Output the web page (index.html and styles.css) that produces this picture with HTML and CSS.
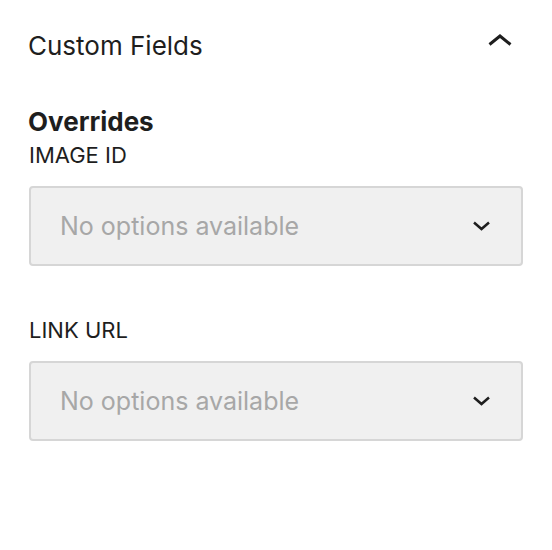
FILE: index.html
```html
<!DOCTYPE html>
<html>
<head>
<meta charset="utf-8">
<link rel="stylesheet" href="styles.css">
</head>
<body>
<div class="panel">
  <div class="panel-header">
    <span class="panel-title">Custom Fields</span>
    <svg class="chevron-up" width="24" height="24" viewBox="0 0 24 24"><path d="M1.5 11.5 L12 3 L22.5 11.5" fill="none" stroke="#1e1e1e" stroke-width="3"/></svg>
  </div>
  <div class="panel-body">
    <h2 class="section-title">Overrides</h2>
    <div class="field">
      <label class="field-label">IMAGE ID</label>
      <div class="select">
        <span class="select-placeholder">No options available</span>
        <svg class="chevron-down" width="17" height="10" viewBox="0 0 17 10"><path d="M1 1.5 L8.5 8 L16 1.5" fill="none" stroke="#1e1e1e" stroke-width="2.5"/></svg>
      </div>
    </div>
    <div class="field">
      <label class="field-label">LINK URL</label>
      <div class="select">
        <span class="select-placeholder">No options available</span>
        <svg class="chevron-down" width="17" height="10" viewBox="0 0 17 10"><path d="M1 1.5 L8.5 8 L16 1.5" fill="none" stroke="#1e1e1e" stroke-width="2.5"/></svg>
      </div>
    </div>
  </div>
</div>
</body>
</html>
```

FILE: styles.css
```css
html, body {
  margin: 0;
  padding: 0;
  background: #ffffff;
}

body {
  font-family: Inter, "Noto Sans", "Liberation Sans", sans-serif;
  color: #1e1e1e;
}

.panel {
  padding: 0 29px 0 29px;
}

.panel-header {
  display: flex;
  align-items: center;
  justify-content: space-between;
  padding-top: 30px;
  height: 32px;
}

.panel-title {
  font-size: 26px;
  line-height: 32px;
  font-weight: 400;
  margin-left: -1px;
}

.chevron-up {
  display: block;
  margin-right: 11px;
  margin-top: -2px;
}

.panel-body {
  padding-top: 44px;
}

.section-title {
  margin: 0 0 0 -1px;
  font-size: 26px;
  line-height: 32px;
  font-weight: 700;
}

.field {
  display: flex;
  flex-direction: column;
}

.field + .field {
  margin-top: 47px;
}

.field-label {
  font-size: 22px;
  line-height: 28px;
  margin-top: 3px;
  margin-bottom: 17px;
}

.select {
  box-sizing: border-box;
  height: 80px;
  display: flex;
  align-items: center;
  justify-content: space-between;
  padding: 0 31px 0 29px;
  background: #f0f0f0;
  border: 2px solid #d6d6d6;
  border-radius: 4px;
}

.select-placeholder {
  font-size: 25px;
  color: #a7a7a7;
}

.chevron-down {
  display: block;
}
```
